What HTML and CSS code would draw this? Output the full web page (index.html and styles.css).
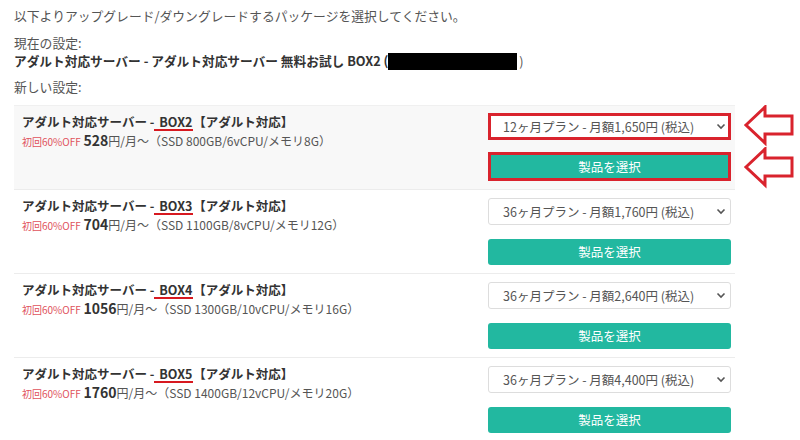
FILE: index.html
```html
<!DOCTYPE html>
<html lang="ja">
<head>
<meta charset="utf-8">
<link rel="stylesheet" href="styles.css">
</head>
<body>
<div class="page">
  <p class="intro">以下よりアップグレード/ダウングレードするパッケージを選択してください。</p>
  <p class="label">現在の設定:</p>
  <p class="current">アダルト対応サーバー - アダルト対応サーバー 無料お試し BOX2 (<span class="redact"></span><span class="paren">)</span></p>
  <p class="label new">新しい設定:</p>

  <div class="list">
    <div class="row first">
      <div class="info">
        <div class="title">アダルト対応サーバー -<span class="mark">BOX2</span>【アダルト対応】</div>
        <div class="price"><span class="off">初回60%OFF</span> <b>528</b>円/月～（SSD 800GB/6vCPU/メモリ8G）</div>
      </div>
      <div class="actions">
        <div class="select hl"><span>12ヶ月プラン - 月額1,650円 (税込)</span><svg class="chev" width="10" height="7" viewBox="0 0 10 7"><path d="M1.5 1.5 L5 5 L8.5 1.5" fill="none" stroke="#555" stroke-width="1.6"/></svg></div>
        <div class="btn hl">製品を選択</div>
      </div>
      <svg class="arrow a1" width="52" height="42" viewBox="0 0 52 42"><path d="M2 20 L21 2 L21 11 L48 11 L48 29 L21 29 L21 38 Z" fill="#fff" stroke="#d9232d" stroke-width="3" stroke-linejoin="miter"/></svg>
      <svg class="arrow a2" width="52" height="42" viewBox="0 0 52 42"><path d="M2 20 L21 2 L21 11 L48 11 L48 29 L21 29 L21 38 Z" fill="#fff" stroke="#d9232d" stroke-width="3" stroke-linejoin="miter"/></svg>
    </div>

    <div class="row">
      <div class="info">
        <div class="title">アダルト対応サーバー -<span class="mark">BOX3</span>【アダルト対応】</div>
        <div class="price"><span class="off">初回60%OFF</span> <b>704</b>円/月～（SSD 1100GB/8vCPU/メモリ12G）</div>
      </div>
      <div class="actions">
        <div class="select"><span>36ヶ月プラン - 月額1,760円 (税込)</span><svg class="chev" width="10" height="7" viewBox="0 0 10 7"><path d="M1.5 1.5 L5 5 L8.5 1.5" fill="none" stroke="#555" stroke-width="1.6"/></svg></div>
        <div class="btn">製品を選択</div>
      </div>
    </div>

    <div class="row">
      <div class="info">
        <div class="title">アダルト対応サーバー -<span class="mark">BOX4</span>【アダルト対応】</div>
        <div class="price"><span class="off">初回60%OFF</span> <b>1056</b>円/月～（SSD 1300GB/10vCPU/メモリ16G）</div>
      </div>
      <div class="actions">
        <div class="select"><span>36ヶ月プラン - 月額2,640円 (税込)</span><svg class="chev" width="10" height="7" viewBox="0 0 10 7"><path d="M1.5 1.5 L5 5 L8.5 1.5" fill="none" stroke="#555" stroke-width="1.6"/></svg></div>
        <div class="btn">製品を選択</div>
      </div>
    </div>

    <div class="row">
      <div class="info">
        <div class="title">アダルト対応サーバー -<span class="mark">BOX5</span>【アダルト対応】</div>
        <div class="price"><span class="off">初回60%OFF</span> <b>1760</b>円/月～（SSD 1400GB/12vCPU/メモリ20G）</div>
      </div>
      <div class="actions">
        <div class="select"><span>36ヶ月プラン - 月額4,400円 (税込)</span><svg class="chev" width="10" height="7" viewBox="0 0 10 7"><path d="M1.5 1.5 L5 5 L8.5 1.5" fill="none" stroke="#555" stroke-width="1.6"/></svg></div>
        <div class="btn">製品を選択</div>
      </div>
    </div>
  </div>
</div>
</body>
</html>
```

FILE: styles.css
```css
* { box-sizing: border-box; }
html, body { margin: 0; padding: 0; background: #fff; }
body {
  font-family: "Noto Sans CJK JP", "Noto Sans", sans-serif;
  color: #555;
  font-size: 12.5px;
  overflow: hidden;
}
.page {
  width: 800px;
  padding: 6px 0 0 14px;
}
p { margin: 0; }
.intro { line-height: 20px; margin-bottom: 8px; font-size: 12.8px; }
.label { line-height: 18px; font-size: 12.8px; }
.current {
  line-height: 18px;
  font-weight: bold;
  color: #333;
  font-size: 12.7px;
  display: flex;
  align-items: center;
}
.redact {
  display: inline-block;
  width: 129px;
  height: 17px;
  background: #000;
  margin-left: 0;
}
.paren { font-weight: normal; color: #555; margin-left: 2px; }
.label.new { margin-top: 8px; margin-bottom: 9px; }

.list { width: 721px; }
.row {
  position: relative;
  display: flex;
  justify-content: space-between;
  border-top: 1px solid #ececec;
  padding: 7px 4px 8px 8px;
  height: 84px;
}
.row.first { background: #f8f8f8; border-top-color: #f0f0f0; }
.title {
  font-weight: bold;
  color: #333;
  font-size: 12.5px;
  line-height: 18px;
}
.mark {
  display: inline-block;
  line-height: 15px;
  border-bottom: 2px solid #d71920;
  padding: 0 1px 0 5px;
}
.price {
  line-height: 18px;
  font-size: 12px;
  color: #555;
}
.off { color: #e0525c; font-size: 10px; }
.price b { font-size: 14px; color: #333; }

.actions {
  width: 243px;
  display: flex;
  flex-direction: column;
  gap: 14px;
  padding-top: 1px;
}
.select {
  height: 27px;
  background: #fff;
  border: 1px solid #ddd;
  border-radius: 3px;
  display: flex;
  align-items: center;
  justify-content: space-between;
  padding: 0 4px 0 14px;
  color: #555;
  font-size: 12.5px;
}
.btn {
  height: 27px;
  background: #22b8a0;
  border-radius: 3px;
  color: #fff;
  font-size: 12.5px;
  display: flex;
  align-items: center;
  justify-content: center;
}
.hl { border: 3px solid #d9232d; border-radius: 0; }
.select.hl { height: 29px; margin-top: -1px; padding-left: 12px; padding-right: 2px; }
.btn.hl { height: 31px; margin-top: -2px; }

.arrow { position: absolute; left: 730px; }
.a1 { top: -1px; }
.a2 { top: 41px; }
```
